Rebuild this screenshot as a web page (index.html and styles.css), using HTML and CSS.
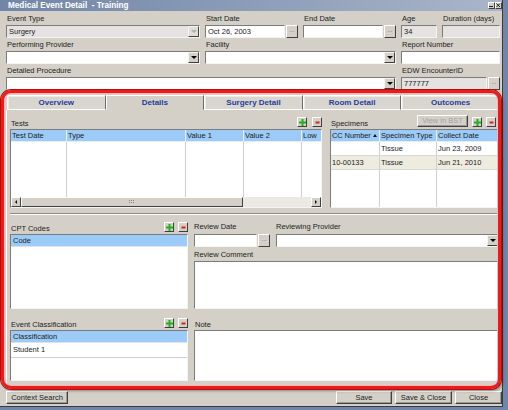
FILE: index.html
```html
<!DOCTYPE html>
<html lang="en">
<head>
    <meta charset="UTF-8">
    <title>Medical Event Detail - Training</title>
    <link rel="stylesheet" href="styles.css">
</head>
<body>
<div class="window">
    <div class="titlebar">
        <span class="title">Medical Event Detail&nbsp; - Training</span>
        <div class="winbtns">
            <span class="wbtn"><svg width="5" height="5"><rect x="0" y="3" width="4" height="1" fill="#222"/></svg></span>
            <span class="wbtn"><svg width="5" height="5"><path d="M0.5 0.5L4 4M4 0.5L0.5 4" stroke="#222" stroke-width="1"/></svg></span>
        </div>
    </div>

    <div class="fields">
        <div class="field">
            <label>Event Type</label>
            <div class="box off combo"><span class="txt">Surgery</span><span class="drop dim"></span></div>
        </div>
        <div class="field">
            <label>Start Date</label>
            <div class="dated"><div class="box">Oct 26, 2003</div><span class="dots">...</span></div>
        </div>
        <div class="field">
            <label>End Date</label>
            <div class="dated"><div class="box"></div><span class="dots">...</span></div>
        </div>
        <div class="field">
            <label>Age</label>
            <div class="box off">34</div>
        </div>
        <div class="field">
            <label>Duration (days)</label>
            <div class="box off"></div>
        </div>

        <div class="field">
            <label>Performing Provider</label>
            <div class="box combo"><span class="txt"></span><span class="drop"></span></div>
        </div>
        <div class="field span2">
            <label>Facility</label>
            <div class="box combo"><span class="txt"></span><span class="drop"></span></div>
        </div>
        <div class="field span2">
            <label>Report Number</label>
            <div class="box"></div>
        </div>

        <div class="field span3">
            <label>Detailed Procedure</label>
            <div class="box combo"><span class="txt"></span><span class="drop"></span></div>
        </div>
        <div class="field span2">
            <label>EDW EncounterID</label>
            <div class="dated"><div class="box off">777777</div><span class="dots">...</span></div>
        </div>
    </div>

    <div class="tabarea">
        <div class="tabstrip">
            <div class="tab">Overview</div>
            <div class="tab active">Details</div>
            <div class="tab">Surgery Detail</div>
            <div class="tab">Room Detail</div>
            <div class="tab">Outcomes</div>
        </div>
        <div class="panel">
            <div class="toprow">
                <div class="tests">
                    <div class="sechead">
                        <span>Tests</span>
                        <div class="pm">
                            <span class="sq"><svg width="7" height="7"><path d="M2.5 0h2v2.5H7v2H4.5V7h-2V4.5H0v-2h2.5z" fill="#1fb21f"/></svg></span>
                            <span class="sq"><svg width="7" height="7"><rect x="1.5" y="2.5" width="4" height="2" fill="#e02020"/></svg></span>
                        </div>
                    </div>
                    <div class="grid">
                        <div class="cols tcols hdr">
                            <div>Test Date</div><div>Type</div><div>Value 1</div><div>Value 2</div><div>Low</div>
                        </div>
                        <div class="cols tcols body">
                            <div></div><div></div><div></div><div></div><div></div>
                        </div>
                        <div class="hscroll">
                            <span class="sbtn"><i class="tri-l"></i></span>
                            <span class="thumb"><svg width="6" height="4"><rect x="0" y="0" width="1" height="1" fill="#888"/><rect x="2" y="0" width="1" height="1" fill="#888"/><rect x="4" y="0" width="1" height="1" fill="#888"/><rect x="0" y="2" width="1" height="1" fill="#888"/><rect x="2" y="2" width="1" height="1" fill="#888"/><rect x="4" y="2" width="1" height="1" fill="#888"/></svg></span>
                            <span class="track"></span>
                            <span class="sbtn"><i class="tri-r"></i></span>
                        </div>
                    </div>
                </div>

                <div class="specs">
                    <div class="sechead">
                        <span>Specimens</span>
                        <div class="pm">
                            <span class="btn bst">View in BST</span>
                            <span class="sq"><svg width="7" height="7"><path d="M2.5 0h2v2.5H7v2H4.5V7h-2V4.5H0v-2h2.5z" fill="#1fb21f"/></svg></span>
                            <span class="sq"><svg width="7" height="7"><rect x="1.5" y="2.5" width="4" height="2" fill="#e02020"/></svg></span>
                        </div>
                    </div>
                    <div class="grid">
                        <div class="cols scols hdr">
                            <div class="sorted">CC Number<i class="tri-u"></i></div><div>Specimen Type</div><div>Collect Date</div>
                        </div>
                        <div class="cols scols row">
                            <div></div><div>Tissue</div><div>Jun 23, 2009</div>
                        </div>
                        <div class="cols scols row alt">
                            <div>10-00133</div><div>Tissue</div><div>Jun 21, 2010</div>
                        </div>
                        <div class="cols scols body">
                            <div></div><div></div><div></div>
                        </div>
                    </div>
                </div>
            </div>

            <div class="splitter"></div>

            <div class="lower">
                <div class="cpt">
                    <div class="sechead">
                        <span>CPT Codes</span>
                        <div class="pm">
                            <span class="sq"><svg width="7" height="7"><path d="M2.5 0h2v2.5H7v2H4.5V7h-2V4.5H0v-2h2.5z" fill="#1fb21f"/></svg></span>
                            <span class="sq"><svg width="7" height="7"><rect x="1.5" y="2.5" width="4" height="2" fill="#e02020"/></svg></span>
                        </div>
                    </div>
                    <div class="list">
                        <div class="lhead">Code</div>
                    </div>
                </div>

                <div class="review">
                    <div class="rvrow">
                        <div class="field rdate">
                            <label class="lowlbl">Review Date</label>
                            <div class="dated"><div class="box"></div><span class="dots">...</span></div>
                        </div>
                        <div class="field rprov">
                            <label class="lowlbl">Reviewing Provider</label>
                            <div class="box combo"><span class="txt"></span><span class="drop"></span></div>
                        </div>
                    </div>
                    <label class="clbl">Review Comment</label>
                    <div class="area comment"></div>
                </div>

                <div class="evclass">
                    <div class="sechead">
                        <span>Event Classification</span>
                        <div class="pm">
                            <span class="sq"><svg width="7" height="7"><path d="M2.5 0h2v2.5H7v2H4.5V7h-2V4.5H0v-2h2.5z" fill="#1fb21f"/></svg></span>
                            <span class="sq"><svg width="7" height="7"><rect x="1.5" y="2.5" width="4" height="2" fill="#e02020"/></svg></span>
                        </div>
                    </div>
                    <div class="list short">
                        <div class="lhead">Classification</div>
                        <div class="litem">Student 1</div>
                    </div>
                </div>

                <div class="note">
                    <div class="sechead"><span>Note</span></div>
                    <div class="area notearea"></div>
                </div>
            </div>
        </div>
    </div>

    <div class="footer">
        <span class="btn ctx">Context Search</span>
        <span class="btn save">Save</span>
        <span class="btn savec">Save &amp; Close</span>
        <span class="btn close">Close</span>
    </div>

    <div class="mark"></div>
</div>
</body>
</html>
```

FILE: styles.css
```css
* {
    box-sizing: border-box;
}
body {
    margin: 0;
    background: #7087ad;
    font-family: "Liberation Sans", Arial, sans-serif;
    font-size: 7.5px;
    color: #1c1c1c;
}
.window {
    position: relative;
    width: 503px;
    height: 407px;
    background: #d4d0c8;
    border-right: 1px solid #3a3a3a;
    border-bottom: 1px solid #3a3a3a;
}

/* title bar */
.titlebar {
    height: 11px;
    display: flex;
    align-items: center;
    padding-left: 8px;
    background: linear-gradient(to right, #7185a7, #a9b5c9);
}
.title {
    color: #fff;
    font-weight: bold;
    font-size: 8.2px;
}
.winbtns {
    margin-left: auto;
    display: flex;
}
.wbtn {
    width: 7px;
    height: 7px;
    background: #d4d0c8;
    border: 1px solid;
    border-color: #fff #404040 #404040 #fff;
    display: flex;
    align-items: center;
    justify-content: center;
}

/* top fields */
.fields {
    display: grid;
    grid-template-columns: 194px 93px 93px 36px 58px;
    column-gap: 5px;
    padding: 1px 0 0 6px;
}
.field label {
    display: block;
    height: 13px;
    line-height: 13px;
    padding-left: 1px;
    white-space: nowrap;
}
.span2 { grid-column: span 2; }
.span3 { grid-column: span 3; }

.box {
    height: 13px;
    background: #fff;
    border: 1px solid;
    border-color: #7b7b7b #f4f4f4 #f4f4f4 #7b7b7b;
    line-height: 11px;
    padding-left: 2px;
    white-space: nowrap;
    overflow: hidden;
}
.box.off {
    background: #e4e3e1;
}
.combo {
    display: flex;
    padding-right: 0;
}
.combo .txt {
    flex: 1;
}
.drop {
    width: 11px;
    height: 11px;
    background: #d4d0c8;
    border: 1px solid;
    border-color: #f4f4f4 #404040 #404040 #f4f4f4;
    display: flex;
    align-items: center;
    justify-content: center;
}
.drop::after {
    content: "";
    border-left: 3px solid transparent;
    border-right: 3px solid transparent;
    border-top: 3px solid #000;
}
.drop.dim {
    background: #e0ded9;
}
.drop.dim::after {
    border-top-color: #b0b0b0;
}
.dated {
    display: flex;
    gap: 1px;
}
.dated .box {
    flex: 1;
}
.dots {
    width: 12px;
    height: 13px;
    background: #d4d0c8;
    border: 1px solid;
    border-color: #fff #404040 #404040 #fff;
    font-size: 6px;
    line-height: 8px;
    text-align: center;
    color: #555;
}

/* tabs */
.tabarea {
    margin: 5px 0 0 6px;
    width: 494px;
}
.tabstrip {
    display: flex;
    height: 15px;
    padding-left: 1px;
}
.tab {
    flex: 1;
    text-align: center;
    font-weight: bold;
    font-size: 8px;
    line-height: 13px;
    color: #1f3c9b;
    background: #d9d6cf;
    border: 1px solid;
    border-color: #fff #6a6a6a #fff #fff;
    box-shadow: inset 1px 1px #ecebe7;
}
.tab.active {
    background: #d4d0c8;
    border-bottom-color: transparent;
    box-shadow: none;
}
.panel {
    height: 276px;
    border: 1px solid;
    border-color: #fff #6a6a6a #6a6a6a #fff;
    border-top: none;
    padding-left: 3px;
}

/* upper section */
.toprow {
    display: flex;
    gap: 8px;
    height: 103px;
    padding-top: 4px;
}
.tests {
    width: 312px;
}
.specs {
    flex: 1;
    min-width: 0;
}
.sechead {
    display: flex;
    align-items: flex-end;
    height: 15px;
}
.sechead > span {
    line-height: 10px;
    padding-left: 1px;
}
.pm {
    margin-left: auto;
    display: flex;
    gap: 5px;
    margin-bottom: 2px;
    align-items: flex-end;
}
.specs .pm {
    gap: 4px;
    margin-right: 3px;
}
.sq {
    width: 10px;
    height: 10px;
    background: #d4d0c8;
    border: 1px solid;
    border-color: #fff #404040 #404040 #fff;
    display: flex;
    align-items: center;
    justify-content: center;
}
.btn {
    background: #d4d0c8;
    border: 1px solid;
    border-color: #fff #404040 #404040 #fff;
    box-shadow: inset -1px -1px #9a9a9a;
    text-align: center;
    white-space: nowrap;
}
.bst {
    width: 51px;
    height: 12px;
    line-height: 10px;
    color: #a3a3a3;
}

.grid {
    height: 79px;
    background: #fff;
    border: 1px solid;
    border-color: #7b7b7b #f4f4f4 #f4f4f4 #7b7b7b;
    display: flex;
    flex-direction: column;
    overflow: hidden;
}
.cols {
    display: grid;
}
.tcols {
    grid-template-columns: 56px 119px 58px 58px 40px;
}
.scols {
    grid-template-columns: 49px 57px 80px;
}
.cols > div {
    border-right: 1px solid #cfcfcf;
    padding-left: 1px;
    white-space: nowrap;
    overflow: hidden;
}
.hdr {
    height: 12px;
    background: #9dcbf7;
    border-bottom: 1px solid #e9eef5;
}
.hdr > div {
    line-height: 11px;
    border-right-color: #e6eef8;
}
.sorted {
    position: relative;
    letter-spacing: -0.1px;
}
.tri-u {
    position: absolute;
    right: 2px;
    top: 4px;
    border-left: 2px solid transparent;
    border-right: 2px solid transparent;
    border-bottom: 3px solid #111;
}
.row {
    height: 14px;
    border-bottom: 1px solid #d8d8d8;
}
.row > div {
    line-height: 13px;
}
.row.alt {
    background: #eeecdf;
}
.body {
    flex: 1;
}

.hscroll {
    height: 10px;
    display: flex;
    background: #ebe9e4;
}
.sbtn {
    width: 10px;
    height: 10px;
    background: #d4d0c8;
    border: 1px solid;
    border-color: #fff #404040 #404040 #fff;
    display: flex;
    align-items: center;
    justify-content: center;
}
.tri-l {
    border-top: 2px solid transparent;
    border-bottom: 2px solid transparent;
    border-right: 2px solid #111;
}
.tri-r {
    border-top: 2px solid transparent;
    border-bottom: 2px solid transparent;
    border-left: 2px solid #111;
}
.thumb {
    width: 222px;
    height: 10px;
    background: #d4d0c8;
    border: 1px solid;
    border-color: #fff #404040 #404040 #fff;
    display: flex;
    align-items: center;
    justify-content: center;
}
.track {
    flex: 1;
}

.splitter {
    height: 2px;
    border-top: 1px solid #8a8a8a;
    border-bottom: 1px solid #fff;
}

/* lower section */
.lower {
    display: grid;
    grid-template-columns: 178px 1fr;
    grid-template-rows: 94px 1fr;
    column-gap: 6px;
    height: 170px;
}
.cpt,
.review {
    padding-top: 4px;
}
.evclass,
.note {
    padding-top: 6px;
}
.cpt .pm,
.evclass .pm {
    gap: 4px;
}
.list {
    height: 75px;
    background: #fff;
    border: 1px solid;
    border-color: #7b7b7b #f4f4f4 #f4f4f4 #7b7b7b;
}
.list.short {
    height: 51px;
}
.lhead {
    height: 12px;
    line-height: 11px;
    padding-left: 2px;
    background: #9dcbf7;
    border-bottom: 1px solid #e3e3e3;
}
.litem {
    height: 15px;
    line-height: 14px;
    padding-left: 2px;
    border-bottom: 1px solid #cfcfcf;
}
.rvrow {
    display: flex;
    gap: 6px;
}
.rdate {
    width: 76px;
}
.rprov {
    flex: 1;
}
.field .lowlbl {
    height: 15px;
    line-height: 15px;
    padding-left: 0;
}
.clbl {
    display: block;
    height: 14px;
    line-height: 15px;
}
.area {
    background: #fff;
    border: 1px solid;
    border-color: #7b7b7b #f4f4f4 #f4f4f4 #7b7b7b;
}
.comment {
    height: 48px;
}
.notearea {
    height: 51px;
}

/* bottom buttons */
.footer {
    display: flex;
    gap: 3px;
    margin-top: 5px;
}
.footer .btn {
    height: 13px;
    line-height: 11px;
}
.ctx {
    width: 62px;
    margin-left: 6px;
}
.save {
    width: 56px;
    margin-left: auto;
}
.savec {
    width: 57px;
}
.close {
    width: 47px;
}

/* red annotation frame drawn over the tab panel */
.mark {
    position: absolute;
    left: 1px;
    top: 90px;
    width: 500px;
    height: 299px;
    border: 3px solid #ef1b1b;
    border-radius: 10px;
    box-shadow: 0 0 0 1px #a81212, inset 0 0 0 1px #ffb3b3, 2px 2px 3px rgba(0, 0, 0, 0.35);
    pointer-events: none;
}
```
